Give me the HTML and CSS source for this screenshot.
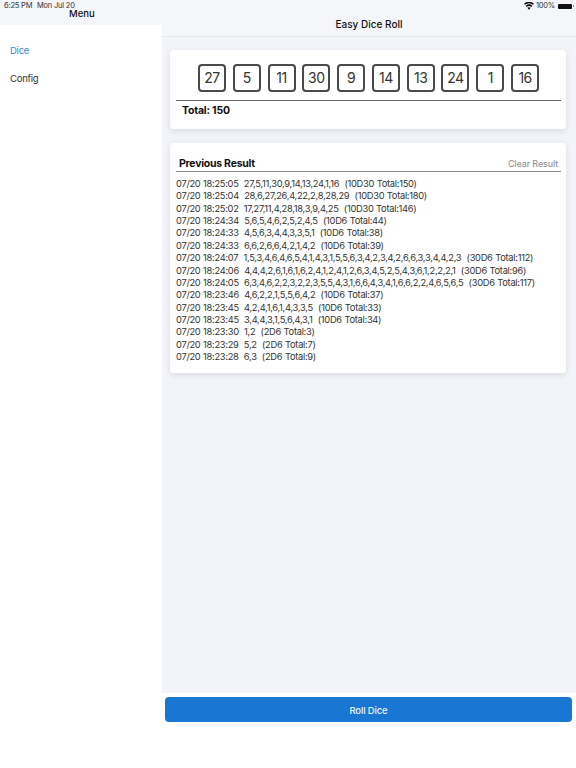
FILE: index.html
```html
<!DOCTYPE html>
<html lang="en">
<head>
    <meta charset="UTF-8">
    <meta name="viewport" content="width=device-width, initial-scale=1.0">
    <title>Easy Dice Roll</title>
    <link rel="stylesheet" href="styles.css">
</head>
<body>

    <!-- status bar sits over the headers -->
    <div class="status-bar">
        <span class="status-time">6:25 PM</span>
        <span class="status-date">Mon Jul 20</span>
        <span class="status-right">
            <svg class="wifi" width="10" height="8" viewBox="0 0 20 15">
                <path d="M10 15l-3.2-3.9a5 5 0 0 1 6.4 0zM5.4 9.4L3.3 7a10.3 10.3 0 0 1 13.4 0l-2.1 2.4a7.2 7.2 0 0 0-9.2 0zM1.9 5.2L0 2.9a15.6 15.6 0 0 1 20 0l-1.9 2.3a12.6 12.6 0 0 0-16.2 0z"/>
            </svg>
            <span class="battery-text">100%</span>
            <span class="battery"></span>
            <span class="battery-tip"></span>
        </span>
    </div>

    <div class="app">
        <aside class="sidebar">
            <div class="sidebar-head">Menu</div>
            <nav class="sidebar-nav">
                <a class="nav-item active">Dice</a>
                <a class="nav-item">Config</a>
            </nav>
        </aside>

        <main class="main">
            <header class="main-head">Easy Dice Roll</header>

            <div class="content">
                <section class="card roll-card">
                    <div class="dice-row">
                        <div class="die">27</div>
                        <div class="die">5</div>
                        <div class="die">11</div>
                        <div class="die">30</div>
                        <div class="die">9</div>
                        <div class="die">14</div>
                        <div class="die">13</div>
                        <div class="die">24</div>
                        <div class="die">1</div>
                        <div class="die">16</div>
                    </div>
                    <div class="total">Total: 150</div>
                </section>

                <section class="card history-card">
                    <div class="history-head">
                        <h2>Previous Result</h2>
                        <span class="clear">Clear Result</span>
                    </div>
                    <ul class="history">
                        <li>07/20 18:25:05  27,5,11,30,9,14,13,24,1,16  (10D30 Total:150)</li>
                        <li>07/20 18:25:04  28,6,27,26,4,22,2,8,28,29  (10D30 Total:180)</li>
                        <li>07/20 18:25:02  17,27,11,4,28,18,3,9,4,25  (10D30 Total:146)</li>
                        <li>07/20 18:24:34  5,6,5,4,6,2,5,2,4,5  (10D6 Total:44)</li>
                        <li>07/20 18:24:33  4,5,6,3,4,4,3,3,5,1  (10D6 Total:38)</li>
                        <li>07/20 18:24:33  6,6,2,6,6,4,2,1,4,2  (10D6 Total:39)</li>
                        <li>07/20 18:24:07  1,5,3,4,6,4,6,5,4,1,4,3,1,5,5,6,3,4,2,3,4,2,6,6,3,3,4,4,2,3  (30D6 Total:112)</li>
                        <li>07/20 18:24:06  4,4,4,2,6,1,6,1,6,2,4,1,2,4,1,2,6,3,4,5,2,5,4,3,6,1,2,2,2,1  (30D6 Total:96)</li>
                        <li>07/20 18:24:05  6,3,4,6,2,2,3,2,2,3,5,5,4,3,1,6,6,4,3,4,1,6,6,2,2,4,6,5,6,5  (30D6 Total:117)</li>
                        <li>07/20 18:23:46  4,6,2,2,1,5,5,6,4,2  (10D6 Total:37)</li>
                        <li>07/20 18:23:45  4,2,4,1,6,1,4,3,3,5  (10D6 Total:33)</li>
                        <li>07/20 18:23:45  3,4,4,3,1,5,6,4,3,1  (10D6 Total:34)</li>
                        <li>07/20 18:23:30  1,2  (2D6 Total:3)</li>
                        <li>07/20 18:23:29  5,2  (2D6 Total:7)</li>
                        <li>07/20 18:23:28  6,3  (2D6 Total:9)</li>
                    </ul>
                </section>
            </div>

            <div class="footer">
                <button class="roll-btn" type="button">Roll Dice</button>
            </div>
        </main>
    </div>

</body>
</html>
```

FILE: styles.css
```css
html, body {
    margin: 0;
    padding: 0;
    height: 100%;
}

body {
    font-family: 'Inter', 'Liberation Sans', sans-serif;
    color: #111;
    background: #fff;
    overflow: hidden;
}

/* status bar */
.status-bar {
    position: absolute;
    top: 0;
    left: 0;
    right: 0;
    height: 12px;
    font-size: 7.5px;
    letter-spacing: -0.2px;
    line-height: 12px;
    color: #333;
}

.status-time {
    position: absolute;
    left: 4px;
}

.status-date {
    position: absolute;
    left: 37px;
}

.status-right {
    position: absolute;
    right: 2px;
    top: 0;
    display: flex;
    align-items: center;
    height: 12px;
}

.wifi {
    margin-right: 2px;
}

.battery {
    width: 14px;
    height: 5px;
    background: #111;
    border-radius: 1px;
    margin-left: 3px;
}

.battery-tip {
    width: 1px;
    height: 2px;
    background: #888;
    margin-left: 1px;
}

/* layout */
.app {
    display: flex;
    height: 768px;
}

.sidebar {
    width: 162px;
    flex-shrink: 0;
    display: flex;
    flex-direction: column;
}

.sidebar-head {
    height: 25px;
    background: #f5f6f9;
    font-size: 9.5px;
    font-weight: 500;
    line-height: 27px;
    padding-left: 69px;
    box-sizing: border-box;
}

.sidebar-nav {
    background: #fff;
    border-top-right-radius: 3px;
    flex: 1;
    padding-top: 12px;
}

.nav-item {
    display: block;
    height: 28px;
    line-height: 28px;
    padding-left: 10px;
    font-size: 9.5px;
    letter-spacing: -0.25px;
    color: #333;
}

.nav-item.active {
    color: #3a87d6;
}

.main {
    flex: 1;
    display: flex;
    flex-direction: column;
    min-width: 0;
}

.main-head {
    height: 37px;
    box-sizing: border-box;
    background: #f5f6f9;
    border-bottom: 1px solid #e6e7ea;
    text-align: center;
    font-size: 10px;
    font-weight: 500;
    line-height: 48px;
}

.content {
    flex: 1;
    background: #f2f4f9;
    padding: 13px 10px 0 8px;
    display: flex;
    flex-direction: column;
    gap: 14px;
}

.card {
    background: #fff;
    border-radius: 4px;
    box-shadow: 0 2px 6px rgba(0, 0, 0, 0.1);
    padding: 0 5px 0 6px;
}

/* current roll */
.roll-card {
    height: 79px;
    box-sizing: border-box;
    padding-top: 14px;
}

.dice-row {
    display: flex;
    justify-content: center;
    gap: 6.8px;
    padding-bottom: 8px;
    border-bottom: 1px solid #666;
}

.die {
    width: 28px;
    height: 28px;
    box-sizing: border-box;
    border: 2px solid #4a4a4a;
    border-radius: 4px;
    font-size: 14px;
    letter-spacing: -0.5px;
    line-height: 24px;
    text-align: center;
    color: #333;
}

.total {
    font-size: 10.5px;
    font-weight: 700;
    letter-spacing: -0.2px;
    line-height: 20px;
    padding-left: 6px;
}

/* history */
.history-card {
    height: 230px;
    box-sizing: border-box;
    padding-top: 13px;
}

.history-head {
    display: flex;
    justify-content: space-between;
    align-items: center;
    height: 15px;
    padding: 0 3px;
    border-bottom: 1px solid #888;
}

.history-head h2 {
    margin: 0;
    font-size: 10.5px;
    font-weight: 700;
    letter-spacing: -0.25px;
}

.clear {
    font-size: 9px;
    letter-spacing: -0.1px;
    color: #888;
}

.history {
    list-style-type: none;
    margin: 6px 0 0;
    padding: 0;
}

.history li {
    font-size: 9.3px;
    letter-spacing: -0.28px;
    word-spacing: 0.3px;
    line-height: 12.36px;
    white-space: pre;
    color: #333;
}

/* bottom button */
.footer {
    height: 75px;
    box-sizing: border-box;
    background: #fff;
    padding: 4px 4px 0 3px;
}

.roll-btn {
    display: block;
    width: 100%;
    height: 25px;
    border: none;
    border-radius: 4px;
    background: #1976d2;
    color: #e8f2fc;
    font-family: inherit;
    font-size: 9.5px;
    font-weight: 500;
    letter-spacing: -0.15px;
    padding: 2px 0 0;
}
```
